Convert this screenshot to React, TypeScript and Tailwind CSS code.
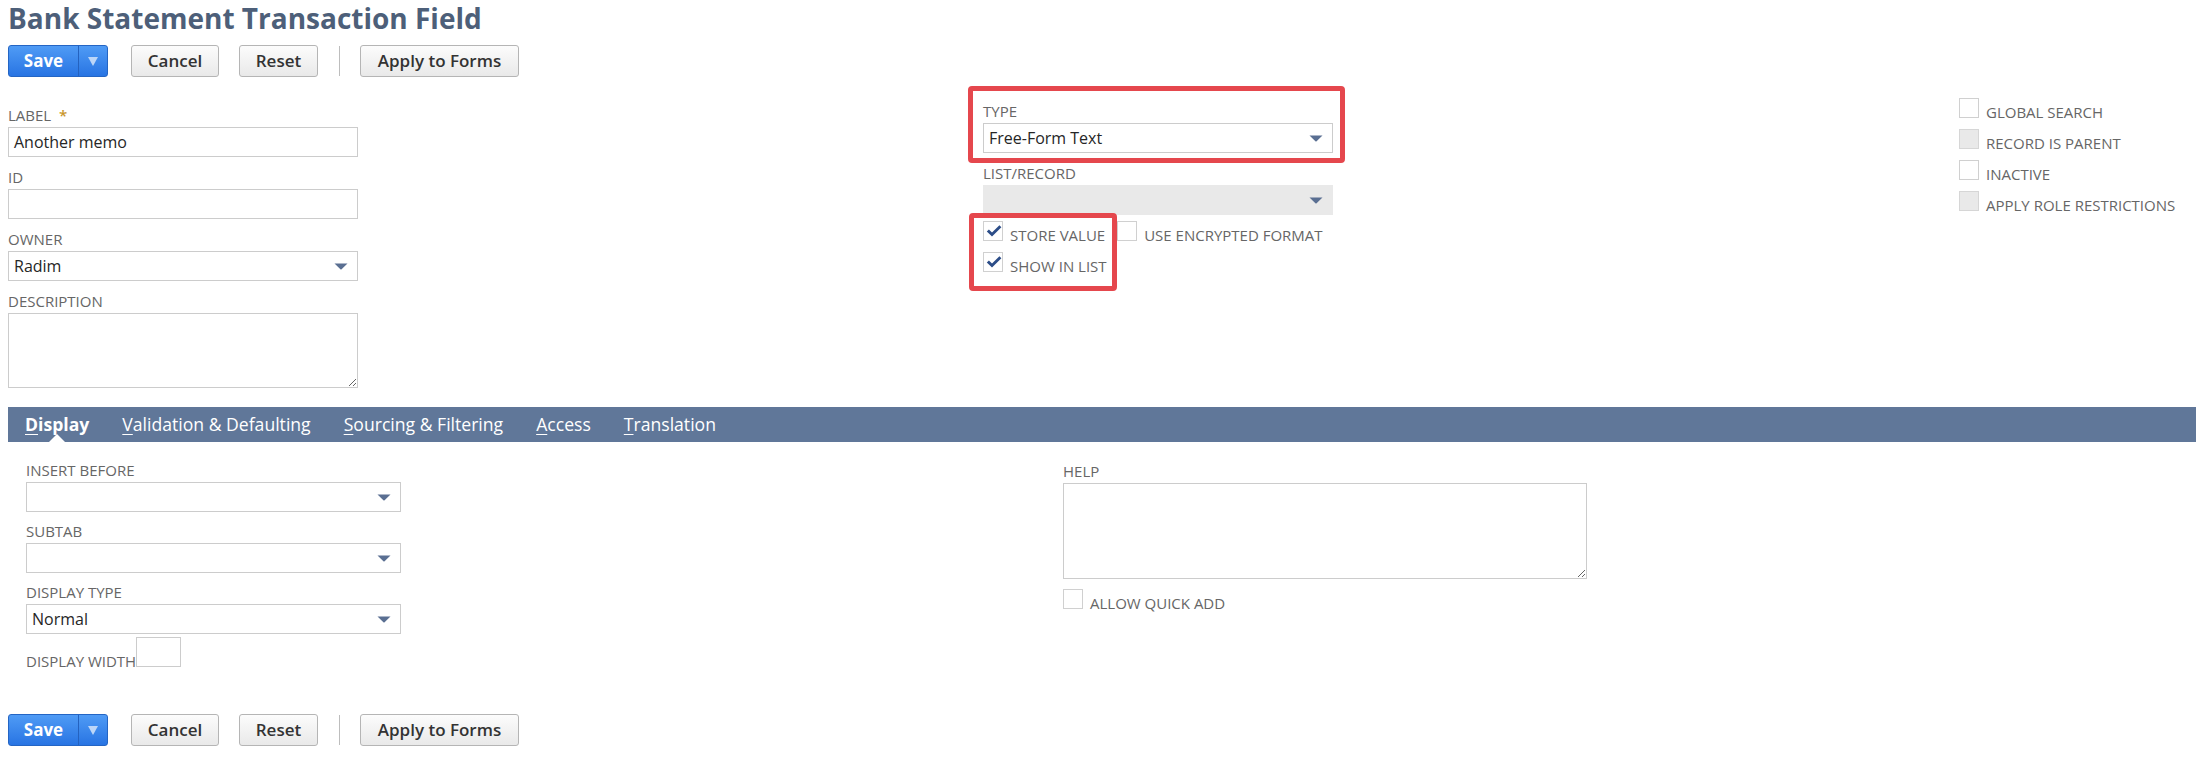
import type { ReactNode } from "react";

function FieldLabel({ children }: { children: ReactNode }) {
  return (
    <div className="mb-[1px] h-[18px] whitespace-nowrap text-[15px] leading-[15px] text-[#666666]">
      {children}
    </div>
  );
}

function Arrow() {
  return (
    <svg width="14" height="7" viewBox="0 0 14 7" className="shrink-0">
      <path d="M0.5 0.5 H13.5 L7.6 6.3 Q7 6.9 6.4 6.3 Z" fill="#5a6f92" />
    </svg>
  );
}

function SelectBox({
  value,
  width,
  disabled,
}: {
  value?: string;
  width: string;
  disabled?: boolean;
}) {
  return (
    <div
      className={`flex h-[30px] ${width} items-center justify-between pl-[5px] pr-[9px] text-[16px] text-[#262626] ${
        disabled
          ? "border border-[#e9e9e9] bg-[#e9e9e9]"
          : "border border-[#cccccc] bg-white"
      }`}
    >
      <span>{value}</span>
      <Arrow />
    </div>
  );
}

function CheckBox({
  checked,
  disabled,
}: {
  checked?: boolean;
  disabled?: boolean;
}) {
  return (
    <div
      className={`relative h-[20px] w-[20px] shrink-0 border ${
        disabled
          ? "border-[#d6d6d6] bg-[#e9e9e9]"
          : "border-[#d0d0d0] bg-white"
      }`}
    >
      {checked && (
        <svg
          width="16"
          height="12"
          viewBox="0 0 16 12"
          className="absolute left-[2px] top-[3px]"
        >
          <path
            d="M0.8 6.6 L2.9 4.5 L6 7.4 L13.4 0.2 L15.4 2.2 L6 11.4 Z"
            fill="#2c4d88"
          />
        </svg>
      )}
    </div>
  );
}

function CheckRow({
  label,
  checked,
  disabled,
}: {
  label: string;
  checked?: boolean;
  disabled?: boolean;
}) {
  return (
    <div className="flex items-end">
      <CheckBox checked={checked} disabled={disabled} />
      <span className="ml-[7px] whitespace-nowrap text-[15px] leading-[12px] text-[#666666]">
        {label}
      </span>
    </div>
  );
}

function ButtonBar() {
  return (
    <div className="flex h-[32px] items-center">
      <div className="flex h-[32px] w-[100px] overflow-hidden rounded-[3px] border border-[#2465c4] bg-gradient-to-b from-[#4f9bf5] to-[#2874e3]">
        <div className="flex w-[69px] items-center justify-center text-[17px] font-bold text-white">
          Save
        </div>
        <div className="flex flex-1 items-center justify-center border-l border-[#2462bf]">
          <svg width="10" height="9" viewBox="0 0 10 9">
            <path d="M0 0 H10 L5 9 Z" fill="#bcd6f8" />
          </svg>
        </div>
      </div>
      <button className="ml-[23px] flex h-[32px] w-[88px] items-center justify-center rounded-[3px] border border-[#b5b5b5] bg-gradient-to-b from-[#fcfcfc] to-[#e9e9e9] text-[17px] font-semibold text-[#333333]">
        Cancel
      </button>
      <button className="ml-[20px] flex h-[32px] w-[79px] items-center justify-center rounded-[3px] border border-[#b5b5b5] bg-gradient-to-b from-[#fcfcfc] to-[#e9e9e9] text-[17px] font-semibold text-[#333333]">
        Reset
      </button>
      <div className="ml-[21px] h-[30px] w-px bg-[#bdbdbd]" />
      <button className="ml-[20px] flex h-[32px] w-[159px] items-center justify-center rounded-[3px] border border-[#b5b5b5] bg-gradient-to-b from-[#fcfcfc] to-[#e9e9e9] text-[17px] font-semibold text-[#333333]">
        Apply to Forms
      </button>
    </div>
  );
}

const tabs = [
  { key: "D", rest: "isplay", active: true },
  { key: "V", rest: "alidation & Defaulting" },
  { key: "S", rest: "ourcing & Filtering" },
  { key: "A", rest: "ccess" },
  { key: "T", rest: "ranslation" },
];

export default function App() {
  return (
    <div className="min-h-screen bg-white pl-2 font-['Open_Sans',sans-serif]">
      <h1 className="h-[36px] text-[28px] font-bold leading-[36px] text-[#4d5f79]">
        Bank Statement Transaction Field
      </h1>

      <div className="mt-[9px]">
        <ButtonBar />
      </div>

      {/* main fields */}
      <div className="mt-[21px] flex items-start">
        <div className="w-[350px] pt-[10px]">
          <FieldLabel>
            LABEL <span className="ml-[4px] font-semibold text-[#c9962b]">*</span>
          </FieldLabel>
          <div className="flex h-[30px] items-center border border-[#cccccc] pl-[5px] text-[16px] text-[#262626]">
            Another memo
          </div>

          <div className="mt-[13px]">
            <FieldLabel>ID</FieldLabel>
            <div className="h-[30px] border border-[#cccccc]" />
          </div>

          <div className="mt-[13px]">
            <FieldLabel>OWNER</FieldLabel>
            <SelectBox value="Radim" width="w-[350px]" />
          </div>

          <div className="mt-[13px]">
            <FieldLabel>DESCRIPTION</FieldLabel>
            <textarea
              readOnly
              className="block h-[75px] w-[350px] resize border border-[#cccccc] outline-none"
            />
          </div>
        </div>

        <div className="relative ml-[625px] w-[350px] pt-[6px]">
          <FieldLabel>TYPE</FieldLabel>
          <SelectBox value="Free-Form Text" width="w-[350px]" />

          <div className="mt-[13px]">
            <FieldLabel>LIST/RECORD</FieldLabel>
            <SelectBox width="w-[350px]" disabled />
          </div>

          <div className="mt-[6px] flex flex-col gap-[11px]">
            <div className="flex items-end">
              <CheckRow label="STORE VALUE" checked />
              <div className="ml-[12px]">
                <CheckRow label="USE ENCRYPTED FORMAT" />
              </div>
            </div>
            <CheckRow label="SHOW IN LIST" checked />
          </div>

          {/* highlight annotations */}
          <div className="pointer-events-none absolute -left-[15px] -top-[12px] h-[77px] w-[377px] rounded-[4px] border-[5px] border-[#e5474d]" />
          <div className="pointer-events-none absolute -left-[14px] top-[115px] h-[78px] w-[148px] rounded-[4px] border-[5px] border-[#e5474d]" />
        </div>

        <div className="ml-[626px] flex flex-col gap-[11px]">
          <CheckRow label="GLOBAL SEARCH" />
          <CheckRow label="RECORD IS PARENT" disabled />
          <CheckRow label="INACTIVE" />
          <CheckRow label="APPLY ROLE RESTRICTIONS" disabled />
        </div>
      </div>

      {/* subtabs */}
      <div className="mt-[19px] flex h-[35px] items-center gap-[33px] bg-[#607799] pl-[17px] text-[17.6px] leading-[35px] text-white">
        {tabs.map((t) => (
          <div
            key={t.key}
            className={`relative h-[35px] whitespace-nowrap ${t.active ? "font-bold" : ""}`}
          >
            <span className="underline decoration-1 underline-offset-[3px]">{t.key}</span>
            {t.rest}
            {t.active && (
              <div className="absolute bottom-0 left-1/2 h-0 w-0 -translate-x-1/2 border-b-[8px] border-l-[8px] border-r-[8px] border-b-white border-l-transparent border-r-transparent" />
            )}
          </div>
        ))}
      </div>

      <div className="flex items-start">
        <div className="w-[393px] pl-[18px] pt-[21px]">
          <FieldLabel>INSERT BEFORE</FieldLabel>
          <SelectBox width="w-[375px]" />

          <div className="mt-[12px]">
            <FieldLabel>SUBTAB</FieldLabel>
            <SelectBox width="w-[375px]" />
          </div>

          <div className="mt-[12px]">
            <FieldLabel>DISPLAY TYPE</FieldLabel>
            <SelectBox value="Normal" width="w-[375px]" />
          </div>

          <div className="mt-[3px] flex items-end">
            <span className="whitespace-nowrap text-[15px] leading-[12px] text-[#666666]">
              DISPLAY WIDTH
            </span>
            <div className="h-[30px] w-[45px] border border-[#cccccc]" />
          </div>
        </div>

        <div className="ml-[662px] w-[524px] pt-[22px]">
          <FieldLabel>HELP</FieldLabel>
          <textarea
            readOnly
            className="block h-[96px] w-[524px] resize border border-[#cccccc] outline-none"
          />
          <div className="mt-[10px]">
            <CheckRow label="ALLOW QUICK ADD" />
          </div>
        </div>
      </div>

      <div className="mt-[47px] pb-[25px]">
        <ButtonBar />
      </div>
    </div>
  );
}
